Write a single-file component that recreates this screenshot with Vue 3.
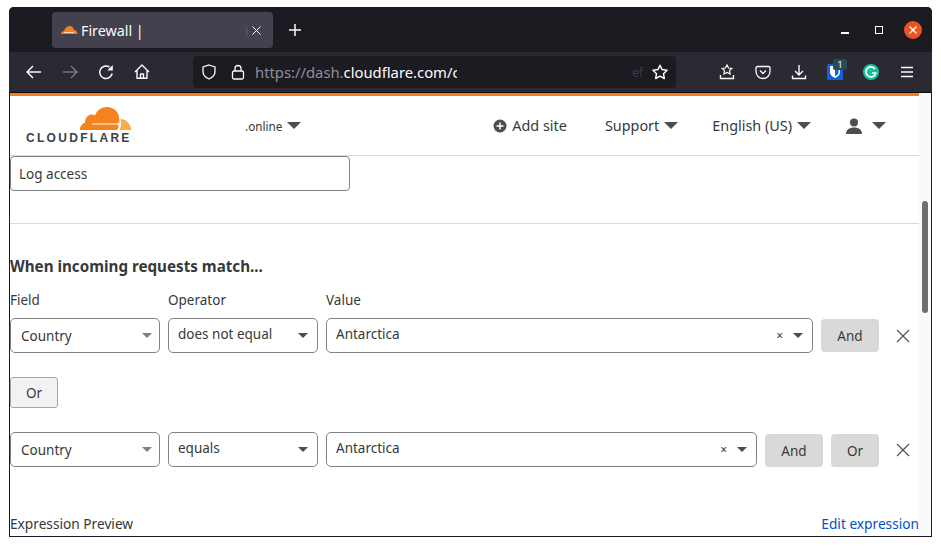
<script setup>
const rows = [
  { id: 1, operator: "does not equal", buttons: ["And"] },
  { id: 2, operator: "equals", buttons: ["And", "Or"] },
];
</script>

<template>
  <div class="window">
    <div class="titlebar">
      <div class="tab">
        <svg class="favicon" width="18" height="10" viewBox="0 0 18 10">
          <path d="M1 9c0-2 1.500-3 3-3 .8-3 3-5 5.500-5 2.500 0 4 1.500 4.500 4 2 0 3.500 1.500 3.500 4z" fill="#f38020" />
          <path d="M4 7.500h10" stroke="#fff" stroke-width=".7" />
        </svg>
        <span class="tab-title">Firewall |</span>
        <span class="tab-fade">)</span>
        <svg class="tab-close" width="9" height="9" viewBox="0 0 9 9">
          <path d="M.5.500l8 8M8.500.500l-8 8" stroke="#fbfbfe" stroke-width="1" />
        </svg>
      </div>
      <svg class="newtab" width="14" height="14" viewBox="0 0 14 14">
        <path d="M7 1v12M1 7h12" stroke="#fbfbfe" stroke-width="1.500" />
      </svg>
      <div class="win-controls">
        <span class="win-min"></span>
        <span class="win-max"></span>
        <span class="win-close">
          <svg width="10" height="10" viewBox="0 0 10 10">
            <path d="M1.500 1.500l7 7M8.500 1.500l-7 7" stroke="#fff" stroke-width="1.400" />
          </svg>
        </span>
      </div>
    </div>

    <div class="toolbar">
      <div class="nav">
        <svg width="16" height="16" viewBox="0 0 16 16" fill="none" stroke="#fbfbfe" stroke-width="1.500">
          <path d="M1 8h14M7 2L1 8l6 6" />
        </svg>
        <svg width="16" height="16" viewBox="0 0 16 16" fill="none" stroke="#77767d" stroke-width="1.500">
          <path d="M15 8H1M9 2l6 6-6 6" />
        </svg>
        <svg width="16" height="16" viewBox="0 0 16 16" fill="none" stroke="#fbfbfe" stroke-width="1.500">
          <path d="M14.200 9.500A6.300 6.300 0 1 1 11.500 3" />
          <path d="M14.800 1v5.500H9.300z" fill="#fbfbfe" stroke="none" />
        </svg>
        <svg width="16" height="16" viewBox="0 0 16 16" fill="none" stroke="#fbfbfe" stroke-width="1.400" stroke-linejoin="round">
          <path d="M1 8l7-7 7 7M3 6.500V14.200h10V6.500M6.500 14v-4h3v4" />
        </svg>
      </div>
      <div class="urlbar">
        <svg class="shield" width="16" height="16" viewBox="0 0 16 16" fill="none" stroke="#fbfbfe" stroke-width="1.300">
          <path d="M8 1l6 2v4.500c0 3.500-2.500 6-6 7.500-3.500-1.500-6-4-6-7.500V3z" />
        </svg>
        <svg class="lock" width="14" height="16" viewBox="0 0 14 16" fill="none" stroke="#fbfbfe" stroke-width="1.300">
          <rect x="1.500" y="7" width="11" height="8" rx="1.500" />
          <path d="M4 7V4.500a3 3 0 0 1 6 0V7" />
        </svg>
        <span class="url"><span class="url-dim">https://dash.</span>cloudflare.com/c</span>
        <span class="url-fade">ef</span>
        <svg class="star" width="16" height="16" viewBox="0 0 16 16" fill="none" stroke="#fbfbfe" stroke-width="1.500" stroke-linejoin="round">
          <path d="M8 1.200l2.100 4.400 4.900.7-3.500 3.400.8 4.800L8 12.200l-4.300 2.300.8-4.800L1 6.300l4.900-.7z" />
        </svg>
      </div>
      <div class="tools">
        <svg width="16" height="16" viewBox="0 0 16 16" fill="none" stroke="#fbfbfe" stroke-width="1.200">
          <path d="M8 1l1.600 3 3.200.4-2.300 2.300.6 3.300L8 8.500 4.900 10l.6-3.300-2.300-2.300 3.200-.4z" />
          <path d="M1.500 11v3.500h13V11" stroke-width="1.400" />
        </svg>
        <svg width="16" height="16" viewBox="0 0 16 16" fill="none" stroke="#fbfbfe" stroke-width="1.300">
          <path d="M2.500 2.500h11a1.500 1.500 0 0 1 1.500 1.500v3.500a7 7 0 0 1-14 0V4a1.500 1.500 0 0 1 1.500-1.500z" />
          <path d="M5 6.500l3 3 3-3" />
        </svg>
        <svg width="16" height="16" viewBox="0 0 16 16" fill="none" stroke="#fbfbfe" stroke-width="1.400">
          <path d="M8 1v10M4 7l4 4 4-4M1.500 11.500v3h13v-3" />
        </svg>
        <div class="bitwarden">
          <svg width="16" height="16" viewBox="0 0 16 16">
            <rect width="16" height="16" rx="1.500" fill="#175ddc" />
            <path d="M3 2h10v6.500c0 2.500-2.500 4.500-5 5.500-2.500-1-5-3-5-5.500z" fill="#fff" />
            <path d="M8 3.500h3.500v5c0 1.500-1.800 3-3.500 3.800z" fill="#175ddc" />
          </svg>
          <span class="badge">1</span>
        </div>
        <span class="grammarly">
          <svg width="12" height="12" viewBox="0 0 12 12" fill="none" stroke="#fff" stroke-width="1.600">
            <path d="M10 3A5 5 0 1 0 10.800 7H7" />
          </svg>
        </span>
        <svg width="16" height="16" viewBox="0 0 16 16" stroke="#fbfbfe" stroke-width="1.400">
          <path d="M2 3.500h12M2 8h12M2 12.500h12" />
        </svg>
      </div>
    </div>

    <div class="viewport">
      <div class="page">
        <header class="site-header">
          <div class="logo">
            <svg width="52" height="24" viewBox="0 0 52 24">
              <path d="M0 23C0 19 2 16.500 5 16C5 11 8 7 12 7.500C13 7.500 14 8 15 8.500C17 3 22 0 27 0C34 0 39 5 39 11C40 15 39 20 37 23Z" fill="#f6821f" />
              <path d="M40.500 12C46 12 50 16 51.500 23H39.500C41.500 19 41.500 15 40.500 12Z" fill="#fbad41" />
              <path d="M12 17h24" stroke="#fff" stroke-width="1" />
              <path d="M38 14.500l.6 2.100 2.400.4-2.400.4-.6 2.100-.6-2.100-2.400-.4 2.400-.4z" fill="#fff" />
            </svg>
            <span class="logo-text">CLOUDFLARE</span>
          </div>
          <div class="domain">.online<i class="caret"></i></div>
          <nav class="site-nav">
            <a class="add-site">
              <svg width="14" height="14" viewBox="0 0 14 14">
                <circle cx="7" cy="7" r="6.500" fill="#4d4d4d" />
                <path d="M7 3.500v7M3.500 7h7" stroke="#fff" stroke-width="1.500" />
              </svg>
              Add site
            </a>
            <a>Support<i class="caret"></i></a>
            <a>English (US)<i class="caret"></i></a>
            <a class="user">
              <svg width="16" height="16" viewBox="0 0 16 16" fill="#4d4d4d">
                <circle cx="8" cy="4.500" r="4" />
                <path d="M0 16c0-4 3-6.500 8-6.500s8 2.500 8 6.500z" />
              </svg>
              <i class="caret"></i>
            </a>
          </nav>
        </header>

        <div class="name-box">Log access</div>
        <hr class="divider" />

        <h3 class="match-title">When incoming requests match...</h3>
        <div class="labels">
          <span class="col-field">Field</span>
          <span class="col-op">Operator</span>
          <span>Value</span>
        </div>

        <template v-for="(row, i) in rows" :key="row.id">
          <div class="rule-row" :class="{ 'last-row': i === 1 }">
            <div class="select col-field field-select"><span class="low">Country</span><i class="caret small light"></i></div>
            <div class="select col-op op-select"><span>{{ row.operator }}</span><i class="caret small"></i></div>
            <div class="select value">
              <span>Antarctica</span>
              <span class="clear">×</span>
              <i class="caret small"></i>
            </div>
            <button v-for="b in row.buttons" :key="b" class="rule-btn" :class="{ short: b === 'Or' }">{{ b }}</button>
            <svg class="remove" width="14" height="14" viewBox="0 0 14 14">
              <path d="M1 1l12 12M13 1L1 13" stroke="#4d4d4d" stroke-width="1.100" />
            </svg>
          </div>
          <button v-if="i === 0" class="or-btn">Or</button>
        </template>

        <div class="preview-row">
          <span>Expression Preview</span>
          <a class="edit-link">Edit expression</a>
        </div>
      </div>
      <div class="scrollbar"><span class="thumb"></span></div>
    </div>
  </div>
</template>

<style>
html,
body {
  margin: 0;
  background: #fff;
  overflow: hidden;
}
</style>

<style scoped>
.window {
  box-sizing: border-box;
  width: 923px;
  height: 530px;
  margin: 7px 0 0 9px;
  display: flex;
  flex-direction: column;
  overflow: hidden;
  border-radius: 5px 5px 0 0;
  font-family: "Noto Sans", "Open Sans", sans-serif;
  font-size: 13.500px;
  color: #36393a;
  background: #1c1b22;
}
.titlebar {
  height: 45px;
  flex: none;
  display: flex;
  align-items: center;
  padding-left: 43px;
  background: #1c1b22;
}
.tab {
  box-sizing: border-box;
  width: 221px;
  height: 36px;
  margin-top: 1px;
  display: flex;
  align-items: center;
  padding: 0 12px 0 8px;
  background: #42414d;
  border-radius: 4px;
  color: #fbfbfe;
}
.tab-title {
  margin-left: 3px;
  font-size: 14.300px;
}
.tab-fade {
  margin-left: auto;
  margin-right: 4px;
  font-size: 12px;
  color: #5d5c68;
}
.newtab {
  margin-left: 15px;
}
.win-controls {
  margin-left: auto;
  display: flex;
  align-items: center;
  gap: 21px;
  padding-right: 10px;
}
.win-min {
  width: 8px;
  height: 1.500px;
  margin: 7px 5px 0 0;
  background: #fff;
}
.win-max {
  box-sizing: border-box;
  width: 8px;
  height: 8px;
  border: 1px solid #fff;
}
.win-close {
  width: 18px;
  height: 18px;
  border-radius: 50%;
  background: #e95420;
  display: flex;
  align-items: center;
  justify-content: center;
}
.toolbar {
  height: 40px;
  flex: none;
  display: flex;
  align-items: center;
  background: #2b2a33;
  border-bottom: 1px solid #0c0c0d;
  padding-left: 17px;
}
.nav {
  display: flex;
  align-items: center;
  gap: 20px;
}
.urlbar {
  box-sizing: border-box;
  width: 483px;
  height: 32px;
  margin-left: 43px;
  display: flex;
  align-items: center;
  padding: 0 8px;
  background: #1c1b22;
  border-radius: 4px;
  color: #fbfbfe;
}
.shield {
  flex: none;
}
.lock {
  margin-left: 14px;
  flex: none;
}
.url {
  margin-left: 10px;
  width: 202px;
  overflow: hidden;
  white-space: nowrap;
  font-size: 14.800px;
}
.url-dim {
  color: #8f8f9d;
}
.url-fade {
  margin-left: auto;
  margin-right: 9px;
  font-size: 12px;
  color: #3d3c45;
}
.tools {
  display: flex;
  align-items: center;
  gap: 20px;
  margin-left: 43px;
}
.bitwarden {
  position: relative;
  width: 16px;
  height: 16px;
}
.badge {
  position: absolute;
  left: 6px;
  top: -5px;
  width: 14px;
  height: 11px;
  background: #2a4a5a;
  border-radius: 2px;
  color: #fff;
  font-size: 9px;
  line-height: 11px;
  text-align: center;
}
.grammarly {
  width: 16px;
  height: 16px;
  border-radius: 50%;
  background: #15c39a;
  display: flex;
  align-items: center;
  justify-content: center;
}
.viewport {
  flex: 1;
  min-height: 0;
  display: flex;
  background: #fff;
  border: solid #1c1b22;
  border-width: 0 1px 1px;
}
.page {
  flex: 1;
  min-width: 0;
  overflow: hidden;
  border-top: 3px solid #f38020;
}
.site-header {
  box-sizing: border-box;
  height: 60px;
  display: flex;
  align-items: center;
  border-bottom: 1px solid #d9d9d9;
}
.logo {
  width: 235px;
  flex: none;
  padding-left: 16px;
  box-sizing: border-box;
  display: flex;
  flex-direction: column;
  align-items: flex-start;
}
.logo svg {
  margin-left: 54px;
}
.logo-text {
  font-family: "Liberation Sans", sans-serif;
  font-weight: 700;
  font-size: 12px;
  line-height: 14px;
  letter-spacing: 2.300px;
  white-space: nowrap;
  color: #404041;
}
.domain {
  font-size: 11.700px;
  display: flex;
  align-items: center;
}
.site-nav {
  margin-left: auto;
  display: flex;
  align-items: center;
  gap: 34px;
  padding-right: 33px;
  font-size: 14.400px;
}
.site-nav a {
  display: flex;
  align-items: center;
}
.add-site {
  margin-right: 4px;
}
.add-site svg {
  margin-right: 5px;
}
.caret {
  display: inline-block;
  width: 0;
  height: 0;
  margin-left: 5px;
  border: solid transparent;
  border-width: 7px 7px 0;
  border-top-color: #4d4d4d;
}
.caret.small {
  border-width: 5px 5px 0;
  margin-left: 0;
}
.caret.light {
  border-top-color: #808080;
}
.user {
  margin-left: 1px;
}
.user .caret {
  margin-left: 10px;
}
.name-box {
  box-sizing: border-box;
  width: 340px;
  height: 35px;
  line-height: 35px;
  padding-left: 8px;
  border: 1px solid #828282;
  border-radius: 4px;
}
.divider {
  margin: 32px 0 0;
  border: 0;
  border-top: 1px solid #d9d9d9;
}
.match-title {
  margin: 31px 0 0;
  font-size: 15.200px;
  line-height: 22px;
  font-weight: 700;
}
.labels {
  margin-top: 13px;
  height: 20px;
  line-height: 20px;
  display: flex;
  gap: 8px;
}
.rule-row {
  display: flex;
  align-items: center;
  gap: 8px;
  margin-top: 8px;
}
.col-field {
  width: 150px;
}
.col-op {
  width: 150px;
}
.select {
  box-sizing: border-box;
  flex: none;
  height: 35px;
  display: flex;
  align-items: center;
  justify-content: space-between;
  padding: 0 9px 3px;
  border: 1px solid #828282;
  border-radius: 5px;
}
.select .caret {
  margin-top: 3px;
}
.field-select {
  padding: 0 7px 3px 10px;
}
.low {
  padding-top: 3px;
}
.select.value {
  flex: 1;
  min-width: 0;
}
.clear {
  margin-left: auto;
  margin-right: 10px;
  margin-top: 3px;
  font-size: 12px;
  color: #36393a;
}
.rule-btn {
  box-sizing: border-box;
  flex: none;
  width: 58px;
  height: 33px;
  padding: 0;
  border: 0;
  border-radius: 4px;
  background: #d9d9d9;
  color: #36393a;
  font: inherit;
}
.rule-btn.short {
  width: 48px;
}
.last-row .rule-btn {
  align-self: flex-end;
}
.remove {
  flex: none;
  margin: 0 9px;
}
.or-btn {
  display: block;
  box-sizing: border-box;
  width: 48px;
  height: 31px;
  margin-top: 24px;
  margin-bottom: 24px;
  padding: 0;
  border: 1px solid #a6a6a6;
  border-radius: 3px;
  background: #f2f2f2;
  color: #36393a;
  font: inherit;
}
.preview-row {
  display: flex;
  justify-content: space-between;
  margin-top: 47px;
  line-height: 20px;
  font-size: 13.700px;
}
.edit-link {
  color: #0051c3;
}
.scrollbar {
  flex: none;
  width: 12px;
  background: #fafafa;
  position: relative;
}
.thumb {
  position: absolute;
  left: 3px;
  top: 108px;
  width: 6px;
  height: 112px;
  border-radius: 3px;
  background: #6e6e6e;
}
</style>
